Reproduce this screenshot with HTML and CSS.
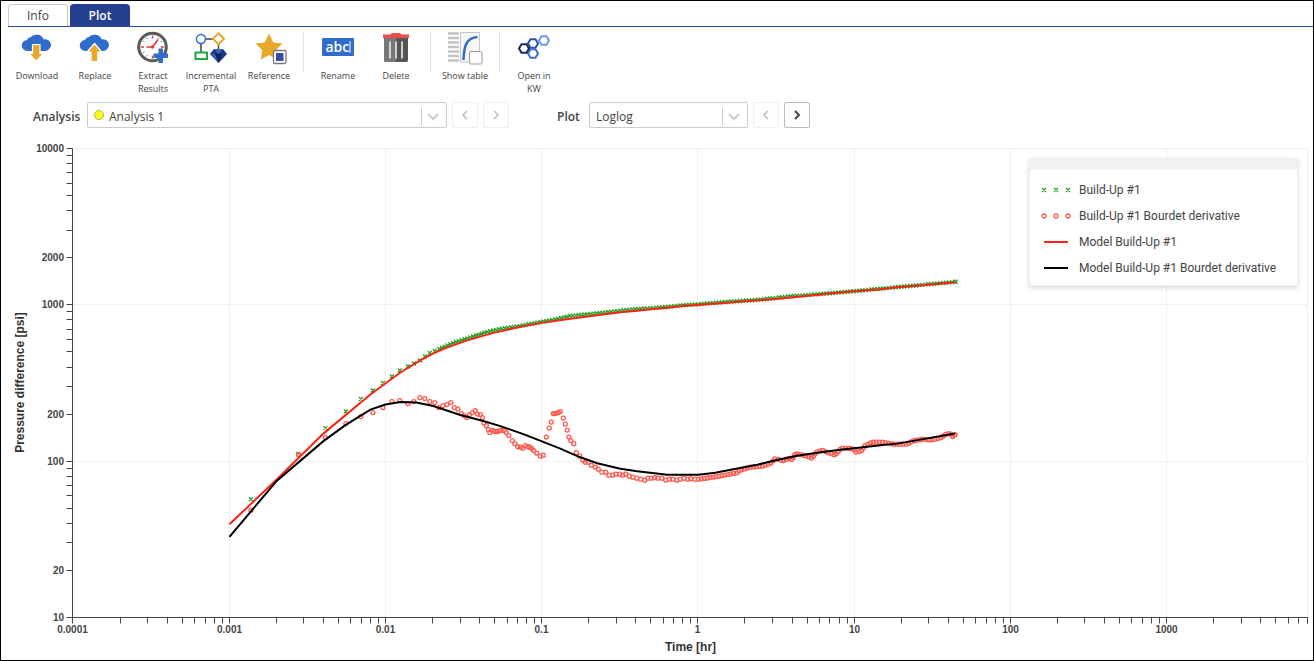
FILE: index.html
```html
<!DOCTYPE html>
<html lang="en">
<head>
<meta charset="utf-8">
<title>Analysis plot</title>
<link rel="stylesheet" href="styles.css">
</head>
<body>
<div class="app">
  <nav class="tabs">
    <button class="tab" type="button">Info</button>
    <button class="tab tab-active" type="button">Plot</button>
  </nav>

  <div class="toolbar">
    <button class="tool" type="button">
      <svg class="icon" viewBox="0 0 32 32"><path fill="#2f6ccb" d="M6.500 19a5.500 5.500 0 0 1-.5-11 4.500 4.500 0 0 1 4-3A8 8 0 0 1 23 7.500a5.500 5.500 0 0 1 5.500 9A4.500 4.500 0 0 1 24.500 19z"/><path fill="#e9a82b" stroke="#fff" stroke-width="1.200" d="M11.500 12.500h7.500v9h3.500L15.200 29.500 8 21.500h3.500z"/></svg>
      <span>Download</span>
    </button>
    <button class="tool" type="button">
      <svg class="icon" viewBox="0 0 32 32"><path fill="#2f6ccb" d="M6.500 19a5.500 5.500 0 0 1-.5-11 4.500 4.500 0 0 1 4-3A8 8 0 0 1 23 7.500a5.500 5.500 0 0 1 5.500 9A4.500 4.500 0 0 1 24.500 19z"/><path fill="#e9a82b" stroke="#fff" stroke-width="1.200" d="M15.500 11.500l7.300 8.500h-4v9.500h-6.800V20h-4z"/></svg>
      <span>Replace</span>
    </button>
    <button class="tool" type="button">
      <svg class="icon" viewBox="0 0 32 32"><circle cx="15.500" cy="15" r="13.800" fill="#fff" stroke="#5a5a5a" stroke-width="3"/><path stroke="#e23b3b" stroke-width="1.500" d="M15.500 3.500v3M15.500 23.500v3M4 15h3M24 15h3"/><path stroke="#777" d="M9.500 5.500l1 1.500M6 9l1.500 1M6 21l1.500-1M9.500 24.500l1-1.500M23.500 10l1.500-1M20.500 7l1-1.500"/><path fill="none" stroke="#e23b3b" stroke-width="1.700" d="M9.500 15h6l5.500-7.500"/><circle cx="15.500" cy="15" r="1.800" fill="#e23b3b"/><path fill="#2f6ccb" d="M21.500 16.500h4.500v5h5v4.500h-5v5h-4.500v-5h-5v-4.500h5z"/></svg>
      <span>Extract<br>Results</span>
    </button>
    <button class="tool" type="button">
      <svg class="icon" viewBox="0 0 32 32"><path fill="none" stroke="#444" stroke-width="1.500" d="M11 7h8M6 11v10M23.500 11v6"/><circle cx="6" cy="7" r="4.500" fill="#fff" stroke="#2f6ccb" stroke-width="1.500"/><path fill="#fff" stroke="#e9a82b" stroke-width="2" d="M23.500 1.300L29 6.800l-5.500 5.500L18 6.800z"/><path fill="#fff" stroke="#22a843" stroke-width="2" d="M.500 20.500h11.500v6.500H.500z"/><path fill="#1c3689" d="M19 17h9l4 5-8.500 9L15 22z"/><path fill="#3f64bd" d="M19 17l4.500 5 4.500-5zM15 22h5l3.500 9z"/><path fill="#0e225f" d="M20 22h7l-3.500 9z"/></svg>
      <span>Incremental<br>PTA</span>
    </button>
    <button class="tool" type="button">
      <svg class="icon" viewBox="0 0 32 32"><path fill="#e9a82b" d="M16 1.500l4.300 8.900 9.200 1.200-6.800 6.600 1.700 9.300L16 23l-8.300 4.500 1.600-9.300-6.700-6.600 9.100-1.200z"/><rect x="20.500" y="18.500" width="12.500" height="13" rx="1.500" fill="#fff" stroke="#777" stroke-width="1.300"/><path fill="#344d9f" d="M23 21h7.500v8H23z"/></svg>
      <span>Reference</span>
    </button>
    <span class="divider"></span>
    <button class="tool" type="button">
      <svg class="icon" viewBox="0 0 32 32"><rect y="6" width="32" height="18" rx="1" fill="#2f6ccb"/><text class="icon-text" x="3.500" y="19.500">abc</text><path stroke="#fff" d="M28 9v12"/></svg>
      <span>Rename</span>
    </button>
    <button class="tool" type="button">
      <svg class="icon" viewBox="0 0 32 32"><path fill="#555" d="M4 6h24v22a2 2 0 0 1-2 2H6a2 2 0 0 1-2-2z"/><path fill="#777" d="M4 6h12v24H6a2 2 0 0 1-2-2z"/><path stroke="#ddd" stroke-width="1.800" d="M10 9.500v17M16 9.500v17M22 9.500v17"/><path fill="#e9504c" d="M10.500 2.500Q11 1 12.500 1h7q1.500 0 2 1.500h7.500v3.500H3V2.500z"/></svg>
      <span>Delete</span>
    </button>
    <span class="divider"></span>
    <button class="tool" type="button">
      <svg class="icon" viewBox="0 0 32 32"><path stroke="#c2c2c2" stroke-width="2.600" d="M-1 1.500h11M-1 6h11M-1 10.500h11M-1 15h11M-1 19.500h11M-1 24h11M-1 28.500h11"/><path fill="#f7f7f7" stroke="#c6c6c6" d="M11.500.500h19v29.500h-19z"/><path fill="none" stroke="#2f6ccb" stroke-width="2.500" d="M14.500 28C15 14 17 6 28.500 5"/><rect x="20.500" y="19.500" width="12.500" height="12.500" rx="1.500" fill="#fff" stroke="#999"/></svg>
      <span>Show table</span>
    </button>
    <span class="divider"></span>
    <button class="tool" type="button">
      <svg class="icon" viewBox="0 0 32 32"><g fill="#fff" stroke-width="2"><path stroke="#6c9bdb" d="M23.500 4.200h5l2.500 4.300-2.500 4.300h-5L21 8.500z"/><path stroke="#2857a8" d="M12.500 7.200h5l2.500 4.300-2.500 4.300h-5L10 11.500z"/><path stroke="#3c72bd" d="M12.500 17.200h5l2.500 4.300-2.500 4.300h-5L10 21.500z"/><path stroke="#18296a" d="M3.500 12.200h5l2.500 4.300-2.500 4.300h-5L1 16.500z"/></g></svg>
      <span>Open in<br>KW</span>
    </button>
  </div>

  <div class="pickers">
    <label class="picker-label picker-label-first" for="analysis">Analysis</label>
    <div class="picker picker-wide">
      <select id="analysis" class="picker-select with-dot"><option>Analysis 1</option></select>
      <span class="dot"></span>
      <svg class="arrow" viewBox="0 0 24 20"><path d="M.500 1v18"/><path class="arrow-v" d="M7 8l5 5 5-5"/></svg>
    </div>
    <button class="step" type="button" disabled aria-label="Previous analysis"><svg viewBox="0 0 10 10"><path d="M7 1L3 5l4 4"/></svg></button>
    <button class="step" type="button" disabled aria-label="Next analysis"><svg viewBox="0 0 10 10"><path d="M3 1l4 4-4 4"/></svg></button>
    <label class="picker-label picker-label-plot" for="plot">Plot</label>
    <div class="picker">
      <select id="plot" class="picker-select"><option>Loglog</option></select>
      <svg class="arrow" viewBox="0 0 24 20"><path d="M.500 1v18"/><path class="arrow-v" d="M7 8l5 5 5-5"/></svg>
    </div>
    <button class="step" type="button" disabled aria-label="Previous plot"><svg viewBox="0 0 10 10"><path d="M7 1L3 5l4 4"/></svg></button>
    <button class="step" type="button" aria-label="Next plot"><svg viewBox="0 0 10 10"><path d="M3 1l4 4-4 4"/></svg></button>
  </div>

  <main class="chart">
    <svg id="chart" class="chart-svg"></svg>
    <div class="legend">
      <div class="legend-bar"></div>
      <ul class="legend-list">
        <li><svg class="key" viewBox="0 0 30 10"><path class="cross" d="M1 3l4 4m0-4l-4 4M13 3l4 4m0-4l-4 4M25 3l4 4m0-4l-4 4"/></svg>Build-Up #1</li>
        <li><svg class="key" viewBox="0 0 30 10"><g class="ring"><circle cx="3" cy="5" r="2"/><circle cx="15" cy="5" r="2"/><circle cx="27" cy="5" r="2"/></g></svg>Build-Up #1 Bourdet derivative</li>
        <li><svg class="key" viewBox="0 0 30 10"><path class="line-red" d="M3 5h24"/></svg>Model Build-Up #1</li>
        <li><svg class="key" viewBox="0 0 30 10"><path class="line-black" d="M3 5h24"/></svg>Model Build-Up #1 Bourdet derivative</li>
      </ul>
    </div>
  </main>
</div>
<script src="chart.js"></script>
</body>
</html>
```
FILE: styles.css
```css
* { box-sizing: border-box; }
body {
  margin: 0;
  background: #fff;
  color: #444;
  font-family: "Open Sans", "Noto Sans", sans-serif;
  font-size: 12px;
}
button, select { font: inherit; color: inherit; }
.app {
  display: flex;
  flex-direction: column;
  min-height: 100vh;
  border: 1px solid #000;
}
.tabs {
  display: flex;
  gap: 2px;
  margin-left: 7px;
  padding-top: 3px;
  border-bottom: 1px solid #2b4a9f;
}
.tab {
  width: 60px;
  height: 22px;
  padding: 0;
  border: 1px solid #ccc;
  border-bottom: 0;
  border-radius: 4px 4px 0 0;
  background: #fff;
}
.tab-active {
  border-color: #233f91;
  background: #233f91;
  color: #fff;
  font-weight: 600;
}
.toolbar {
  display: flex;
  align-items: flex-start;
  padding: 5px 0 0 7px;
  height: 75px;
}
.tool {
  display: flex;
  flex-direction: column;
  align-items: center;
  gap: 5px;
  width: 58px;
  padding: 0;
  border: 0;
  background: none;
  font-size: 9px;
  line-height: 13px;
  white-space: nowrap;
}
.icon { width: 32px; height: 32px; overflow: visible; }
.icon-text { fill: #fff; font-size: 14px; font-weight: 600; }
.divider { width: 1px; height: 40px; margin: 0 5px; background: #e2e2e2; }
.pickers {
  display: flex;
  align-items: center;
  gap: 5px;
  padding-left: 32px;
}
.picker-label { padding-top: 2px; font-weight: 600; }
.picker-label-first { width: 49px; }
.picker-label-plot { width: 27px; margin-left: 43px; }
.picker { position: relative; width: 159px; }
.picker-wide { width: 360px; }
.picker-select {
  display: block;
  width: 100%;
  height: 26px;
  padding: 2px 30px 0 6px;
  border: 1px solid #ccc;
  border-radius: 2px;
  background: #fff;
  appearance: none;
}
.with-dot { padding-left: 21px; }
.dot {
  position: absolute;
  left: 7px;
  top: 8px;
  width: 10px;
  height: 10px;
  border: 1px solid #b5b533;
  border-radius: 50%;
  background: #ffff1f;
}
.arrow {
  position: absolute;
  right: 2px;
  top: 4px;
  width: 24px;
  height: 20px;
  fill: none;
  stroke: #ccc;
  pointer-events: none;
}
.arrow-v { stroke-width: 2; }
.step {
  display: flex;
  align-items: center;
  justify-content: center;
  width: 26px;
  height: 26px;
  padding: 0;
  border: 1px solid #bbb;
  border-radius: 2px;
  background: #fff;
}
.step:disabled { border-color: #eee; color: #bbb; }
.step svg { width: 10px; height: 10px; fill: none; stroke: currentColor; stroke-width: 2; }
.step:disabled svg { stroke-width: 1.5; }
.chart {
  position: relative;
  display: flex;
  flex: 1;
  min-height: 320px;
}
.chart-svg { flex: 1; width: 100%; min-width: 0; }
.grid { fill: none; stroke: #f0f0f0; }
.axis { fill: none; stroke: #444; }
.tick { fill: #444; font: bold 10px "Liberation Sans", Arial, sans-serif; }
.axis-title { fill: #333; font: bold 12px "Liberation Sans", Arial, sans-serif; }
.end { text-anchor: end; }
.middle { text-anchor: middle; }
.cross { fill: none; stroke: #2ca02c; stroke-width: 1.3; }
.ring { fill: none; stroke: #fb5a4f; stroke-width: 1.3; }
.line-red { fill: none; stroke: #fa2314; stroke-width: 2; }
.line-black { fill: none; stroke: #000; stroke-width: 2; }
.legend {
  position: absolute;
  top: 30px;
  right: 15px;
  width: 269px;
  border: 1px solid #eee;
  border-radius: 2px;
  background: #fff;
  box-shadow: 0 2px 5px rgba(0, 0, 0, 0.15);
  font-family: Roboto, "Open Sans", sans-serif;
}
.legend-bar { height: 11px; background: #f2f2f2; }
.legend-list { margin: 0; padding: 7px 0 4px 11px; list-style: none; }
.legend-list li {
  display: flex;
  align-items: center;
  gap: 8px;
  height: 26px;
  white-space: nowrap;
}
.key { width: 30px; height: 10px; }
```
FILE: chart.js
```js
// Series are stored on a 1314 x 661 log-log canvas whose plot area is FRAME.
const FRAME = { left: 72.5, right: 1308, top: 149, bottom: 617 };
const DECADES_X = (FRAME.right - FRAME.left) / 156.3;
const MARGIN = { left: 72, right: 5, top: 20, bottom: 43 };

const model = [[229,524.5],[276,480],[323,434],[370,395],[400,373],[420,361],[433,354],[447,348],[467,341],[493,333.5],[520,327.5],[541,323.5],[570,319.5],[620,313],[637,311.5],[650,310],[667,308.5],[680,307],[700,305.5],[727,303.5],[757,301],[773,300],[823,295],[853,292],[877,290.5],[897,288],[923,286],[955,283]];
const modelDerivative = [[229,537],[276.5,481],[323,441.5],[345,425.5],[370,410],[385,405],[400,402.5],[416,403],[433,406.5],[460,415.5],[483,421.5],[500,426.5],[523,434.5],[541,441.5],[560,449],[577,456.5],[597,463.5],[620,469],[637,471.5],[667,475],[698,475],[715,473],[733,469.5],[757,465],[778,460],[797,456],[817,453],[840,450],[863,447.5],[880,445.5],[897,444],[923,439.5],[955,434]];

const buildUp = [[250.5,499.5],[298,454.5],[325,428.5],[345.5,412],[360.5,399.5],[372.5,391],[382.5,383.5],[391.5,377],[399.5,371],[407.5,367],[413.5,364],[419.5,361],[424.5,357],[429.5,353.5],[434.5,351.5]];
const buildUpTrend = [[439,349.5],[445,347],[453,343.5],[473,337],[487,332.5],[500,329.5],[520,326.5],[541,322.5],[553,320.5],[570,316.5],[586,315],[606,313],[627,310.5],[647,309],[667,307.5],[687,305.5],[698,305],[727,302.5],[757,300.5],[790,297],[823,294.5],[853,292],[890,288.5],[923,285.5],[955.5,282.5]];

const derivative = [[250.5,510.5],[298,455],[325,438],[345.5,424],[360.5,417],[372.5,413],[382.5,408],[391.5,402],[399.5,401],[407.5,404],[413.5,402],[419.5,398],[424.5,399],[429.5,402],[434.5,403],[438.5,408],[442.5,406],[446.5,405],[450.5,403],[454,408],[457.5,409.5],[461,414],[464,416],[466.5,418],[469,415],[472,413],[475,411],[477,414.5],[480,415],[482,418],[483.5,423.5],[486,426],[488,430],[489.5,433],[491.5,430.5],[493.5,431.5],[495.5,432],[497.5,432],[499.5,431],[501,430.5],[503.5,431],[506,433],[508.5,436],[512,441],[514.5,444],[517.5,447],[520,447.5],[522.5,448.5],[525,446],[527.5,447],[529.5,447.5],[531.5,449],[533.5,451],[536.5,453.5],[540,456.5],[543,455.5],[546,437.5],[549,428.5],[551,422.5],[553,414],[554.5,414],[556.5,413.5],[558,413],[560,412],[563,418.5],[565,424.5],[567,430.5],[568.5,437.5],[570.5,441],[573.5,444],[576,453],[579.5,456.5],[582.5,460.5],[585,462.5],[588,462.5],[591,465.5],[595,467.5],[598,469.5],[601.5,472.5],[605.5,472.5],[608.5,475.5],[612.5,475.5],[615.5,474.5],[619.5,474.5],[622.5,475.5],[625.5,474.5],[629,476.5],[632.5,477.5],[636.5,478.5],[640.5,479.5],[644.5,480.5],[647.5,478.5],[651,478.5],[654.5,478],[657.5,478.5],[661.5,478.5],[665.5,480.5],[669,479.5],[672.5,479.5],[676.5,480.5],[680,479.5],[683.5,478.5],[687.5,479.5],[690.5,479],[694.5,479.5]];
const derivativeTrend = [[698,479.5],[713,477.5],[727,475],[737,473],[740,470.5],[750,467.5],[762,466.5],[770,464],[775,459],[783,461],[788,458.5],[792,460],[795,454],[805,456],[812,458.5],[816,452.5],[822,450.5],[828,453],[835,455.5],[841,448.5],[853,449],[856,452.5],[861,451.5],[865,446],[872,442.5],[883,442.5],[893,444.5],[907,444.5],[912,441.5],[923,439.5],[930,440.5],[940,438.5],[945,435],[950,433.5],[953,437.5],[955,435]];

// Evenly spaced samples along a trend line.
function sample(line, step) {
  const out = [];
  let carry = 0;
  for (let i = 1; i < line.length; i++) {
    const [ax, ay] = line[i - 1], [bx, by] = line[i];
    const len = Math.hypot(bx - ax, by - ay);
    let d = carry;
    for (; d < len; d += step) out.push([ax + (bx - ax) * d / len, ay + (by - ay) * d / len]);
    carry = d - len;
  }
  out.push(line[line.length - 1]);
  return out;
}

function draw() {
  const svg = document.getElementById("chart");
  const { width, height } = svg.getBoundingClientRect();
  const L = MARGIN.left, R = width - MARGIN.right, T = MARGIN.top, B = height - MARGIN.bottom;
  const px = x => L + (x - FRAME.left) / (FRAME.right - FRAME.left) * (R - L);
  const py = y => T + (y - FRAME.top) / (FRAME.bottom - FRAME.top) * (B - T);
  const logX = v => L + v / DECADES_X * (R - L);
  const logY = v => B - v / 3 * (B - T);
  const snap = v => Math.round(v) + 0.5;
  const left = L - 0.5;

  let grid = "", axis = `M${left} ${snap(T)}V${snap(B)}H${R - 0.5}v6`, text = "";
  for (let d = 0; d < 8; d++) {
    const x = d ? snap(logX(d) - 0.5) : left;
    if (d) grid += `M${x} ${T}V${B}`;
    text += `<text class="tick middle" x="${x}" y="${B + 16}">${+Math.pow(10, d - 4).toFixed(4)}</text>`;
    for (let k = 1; k < 10; k++) {
      const v = d + Math.log10(k);
      if (v && v <= DECADES_X) axis += `M${snap(logX(v) - 0.5)} ${snap(B)}v6`;
    }
  }
  axis += `M${left} ${snap(B)}v6`;
  grid += `M${R - 0.5} ${T}V${B}`;
  for (let d = 0; d < 4; d++) {
    const y = snap(logY(d));
    if (d) grid += `M${L} ${y}H${R}`;
    text += `<text class="tick end" x="${L - 9}" y="${y + 3}">${Math.pow(10, d + 1)}</text>`;
    if (d < 3) text += `<text class="tick end" x="${L - 9}" y="${snap(logY(d + Math.log10(2))) + 3}">${2 * Math.pow(10, d + 1)}</text>`;
    for (let k = 1; k < (d < 3 ? 10 : 2); k++) axis += `M${left} ${snap(logY(d + Math.log10(k)))}h-6`;
  }
  const path = pts => "M" + pts.map(p => `${px(p[0])} ${py(p[1])}`).join("L");
  const crosses = buildUp.concat(sample(buildUpTrend, 3)).map(p => `M${px(p[0]) - 2} ${py(p[1]) - 2}l4 4m0-4l-4 4`).join("");
  const rings = derivative.concat(sample(derivativeTrend, 3)).map(p => `<circle cx="${px(p[0])}" cy="${py(p[1])}" r="2"/>`).join("");
  const mid = (T + B) / 2;

  svg.innerHTML = `<path class="grid" d="${grid}"/><path class="axis" d="${axis}"/>${text}
    <text class="axis-title middle" x="${(L + R) / 2}" y="${B + 34}">Time [hr]</text>
    <text class="axis-title middle" transform="translate(23 ${mid}) rotate(-90)">Pressure difference [psi]</text>
    <path class="cross" d="${crosses}"/><g class="ring">${rings}</g>
    <path class="line-red" d="${path(model)}"/><path class="line-black" d="${path(modelDerivative)}"/>`;
}

draw();
window.addEventListener("resize", draw);
```
